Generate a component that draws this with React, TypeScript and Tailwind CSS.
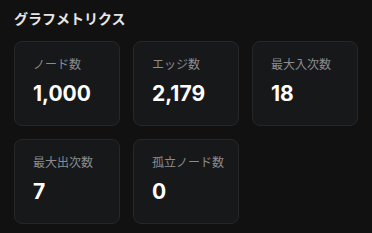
const metrics = [
  { label: 'ノード数', value: '1,000' },
  { label: 'エッジ数', value: '2,179' },
  { label: '最大入次数', value: '18' },
  { label: '最大出次数', value: '7' },
  { label: '孤立ノード数', value: '0' },
]

export default function App() {
  return (
    <div
      className="w-[372px] h-[233px] bg-[#111111] px-[14px] pt-[9px]"
      style={{ fontFamily: 'Inter, "Noto Sans CJK JP", sans-serif' }}
    >
      <h2 className="text-[14px] leading-[20px] font-bold text-[#e6e6e6]">グラフメトリクス</h2>
      <div className="grid grid-cols-3 gap-[13px] mt-[12px]">
        {metrics.map((m) => (
          <div
            key={m.label}
            className="h-[85px] rounded-[8px] border border-[#262728] bg-[#17181a] pl-[18px] pt-[15px]"
          >
            <div className="text-[12px] leading-[16px] text-[#8b8c8e]">{m.label}</div>
            <div className="mt-[9px] text-[21px] leading-[24px] font-bold text-white">{m.value}</div>
          </div>
        ))}
      </div>
    </div>
  )
}
